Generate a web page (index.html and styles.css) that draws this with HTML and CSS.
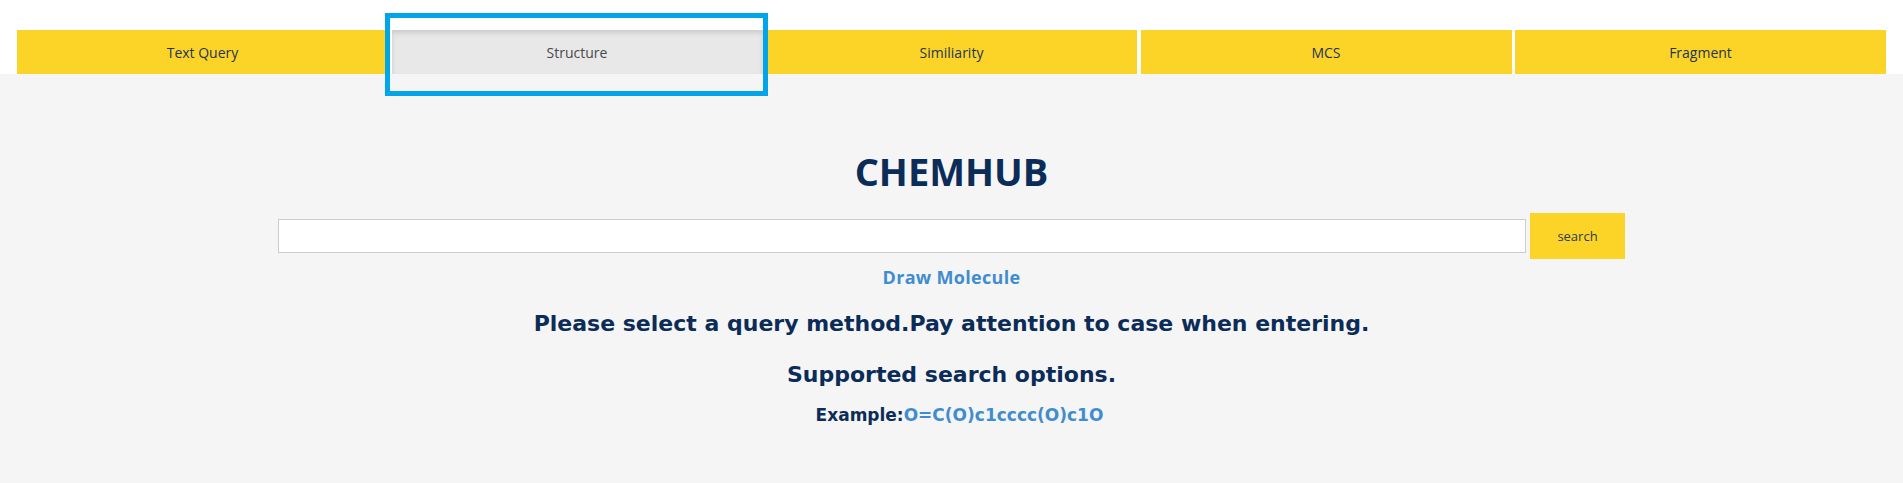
FILE: index.html
```html
<!DOCTYPE html>
<html lang="en">
<head>
<meta charset="utf-8">
<title>CHEMHUB</title>
<link rel="stylesheet" href="styles.css">
</head>
<body>
<header class="topbar">
  <nav class="tabs">
    <a class="tab">Text Query</a>
    <a class="tab active">Structure</a>
    <a class="tab">Similiarity</a>
    <a class="tab">MCS</a>
    <a class="tab">Fragment</a>
  </nav>
  <div class="highlight"></div>
</header>
<main class="panel">
  <h1 class="brand">CHEMHUB</h1>
  <form class="search-row">
    <input class="search-input" type="text">
    <button class="search-btn" type="button">search</button>
  </form>
  <a class="draw-link">Draw Molecule</a>
  <h2 class="notice">Please select a query method.Pay attention to case when entering.</h2>
  <h2 class="notice second">Supported search options.</h2>
  <p class="example">Example:<span class="smiles">O=C(O)c1cccc(O)c1O</span></p>
</main>
</body>
</html>
```
FILE: styles.css
```css
* { box-sizing: border-box; }
html, body { margin: 0; padding: 0; }
body {
  background: #f5f5f5;
  font-family: "Open Sans", "Liberation Sans", sans-serif;
  color: #0b2c58;
}
.topbar {
  position: relative;
  background: #ffffff;
  padding: 30px 17px 0;
}
.tabs {
  display: flex;
  gap: 3.5px;
}
.tab {
  flex: 1 1 0;
  height: 44px;
  display: flex;
  align-items: center;
  justify-content: center;
  background: #fcd427;
  color: #1f3556;
  font-size: 14px;
  text-decoration: none;
}
.tab.active {
  background: #e8e8e8;
  color: #4a4a4a;
  box-shadow: inset 0 3px 5px rgba(0,0,0,0.125);
}
.highlight {
  position: absolute;
  left: 385px;
  top: 13px;
  width: 383px;
  height: 83px;
  border: 5px solid #02a5e7;
}
.panel {
  display: flex;
  flex-direction: column;
  align-items: center;
  padding-top: 75px;
  min-height: 409px;
}
.brand {
  margin: 0;
  font-size: 38px;
  line-height: 44px;
  font-weight: 700;
  color: #0b2c58;
}
.search-row {
  margin: 20px 0 0;
  display: flex;
  align-items: center;
  gap: 4px;
  width: 1347px;
}
.search-input {
  flex: 1 1 auto;
  height: 34px;
  border: 1px solid #cccccc;
  background: #ffffff;
  margin: 0;
}
.search-btn {
  width: 95px;
  height: 46px;
  border: none;
  background: #fcd427;
  color: #2d3b4e;
  font-family: "Open Sans", "Liberation Sans", sans-serif;
  font-size: 13px;
  margin: 0;
}
.draw-link {
  margin-top: 6px;
  font-size: 18px;
  line-height: 24px;
  font-weight: 700;
  letter-spacing: 0.3px;
  color: #3f8dd0;
}
.notice {
  margin: 19.5px 0 0;
  font-family: "DejaVu Sans", "Open Sans", sans-serif;
  font-size: 22px;
  line-height: 30px;
  font-weight: 700;
  color: #0b2c58;
}
.notice.second { margin-top: 21px; }
.example {
  margin: 13.5px 0 0;
  padding-left: 16px;
  font-family: "DejaVu Sans", "Open Sans", sans-serif;
  font-size: 17px;
  line-height: 24px;
  font-weight: 700;
  color: #0b2c58;
}
.smiles { color: #3f8dd0; }
```
